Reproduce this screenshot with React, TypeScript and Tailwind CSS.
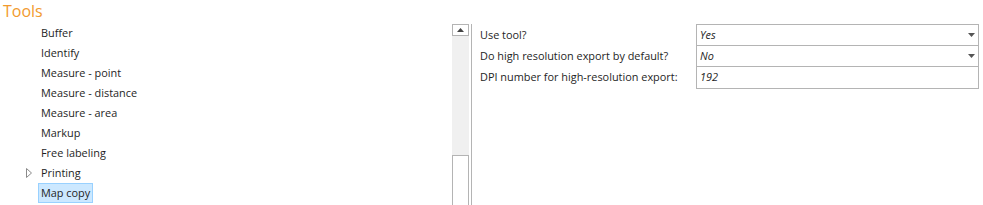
import React from 'react';

const tools = [
  'Buffer',
  'Identify',
  'Measure - point',
  'Measure - distance',
  'Measure - area',
  'Markup',
  'Free labeling',
  'Printing',
  'Map copy',
];

const props = [
  { label: 'Use tool?', value: 'Yes', dropdown: true },
  { label: 'Do high resolution export by default?', value: 'No', dropdown: true },
  { label: 'DPI number for high-resolution export:', value: '192', dropdown: false },
];

const Caret = () => (
  <svg width="7" height="4" viewBox="0 0 7 4" className="shrink-0">
    <path d="M0 0h7L3.5 4z" fill="#555" />
  </svg>
);

export default function App() {
  return (
    <div
      className="w-[983px] h-[205px] bg-white overflow-hidden text-[10.9px] text-[#1e1e1e] flex flex-col whitespace-nowrap"
      style={{ fontFamily: '"Open Sans", "Noto Sans", sans-serif' }}
    >
      <div className="text-[16px] leading-[22px] text-[#f29a2e] pl-[3px] h-[23px]">Tools</div>

      <div className="flex flex-1 min-h-0">
        {/* tree */}
        <div className="w-[452px]">
          {tools.map((t) => {
            const selected = t === 'Map copy';
            return (
              <div key={t} className="h-[20px] flex items-center relative">
                {t === 'Printing' && (
                  <svg width="6" height="10" viewBox="0 0 6 10" className="absolute left-[26px] top-[5px]">
                    <path d="M0.5 0.5L5.5 5L0.5 9.5z" fill="none" stroke="#8a8a8a" />
                  </svg>
                )}
                <span
                  className={`ml-[38px] px-[2px] h-[20px] leading-[18px] border ${
                    selected ? 'bg-[#cce8ff] border-[#99d1ff]' : 'border-transparent'
                  }`}
                >
                  {t}
                </span>
              </div>
            );
          })}
        </div>

        {/* scrollbar */}
        <div className="w-[17px] flex flex-col pt-[1px]">
          <div className="h-[12px] border border-[#b4b4b4] bg-white flex items-center justify-center">
            <svg width="7" height="4" viewBox="0 0 7 4">
              <path d="M0 4h7L3.5 0z" fill="#444" />
            </svg>
          </div>
          <div className="h-[119px] bg-[#f0f0f0]" />
          <div className="flex-1 border border-b-0 border-[#b4b4b4] bg-white" />
        </div>
        <div className="w-[2px]" />
        <div className="w-[1px] bg-[#b4b4b4] mt-[1px]" />

        {/* property grid */}
        <div className="flex flex-1 items-start pt-[1px] pr-[4px]">
          <div className="w-[224px] pl-[8px]">
            {props.map((p) => (
              <div key={p.label} className="h-[21px] leading-[21px]">
                {p.label}
              </div>
            ))}
          </div>
          <div className="flex-1 border border-[#b4b4b4]">
            {props.map((p, i) => (
              <div
                key={p.label}
                className={`h-[21px] flex items-center justify-between pl-[3px] pr-[3px] italic ${
                  i < props.length - 1 ? 'border-b border-[#b4b4b4]' : ''
                }`}
              >
                <span>{p.value}</span>
                {p.dropdown && <Caret />}
              </div>
            ))}
          </div>
        </div>
      </div>
    </div>
  );
}
